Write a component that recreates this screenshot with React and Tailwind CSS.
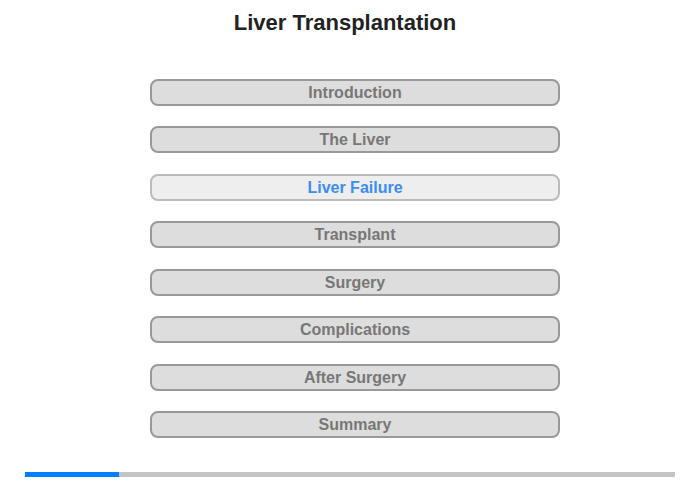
import React from "react";

const sections = [
  "Introduction",
  "The Liver",
  "Liver Failure",
  "Transplant",
  "Surgery",
  "Complications",
  "After Surgery",
  "Summary",
];

const App = () => {
  const active = "Liver Failure";

  return (
    <div className="w-[700px] h-[480px] bg-white flex flex-col font-['Liberation_Sans',Arial,sans-serif]">
      <h1 className="pt-[10px] h-[36px] leading-[26px] text-center pr-[10px] text-[22px] font-bold text-[#222]">
        Liver Transplantation
      </h1>
      <div className="mt-[43px] pl-[10px] flex flex-col items-center gap-[20.43px]">
        {sections.map((s) => (
          <button
            key={s}
            className={
              s === active
                ? "w-[410px] h-[27px] rounded-[8px] border-2 border-[#bbb] bg-[#eee] text-[#3b8cf5] text-[16px] font-bold leading-[23px]"
                : "w-[410px] h-[27px] rounded-[8px] border-2 border-[#999] bg-[#ddd] text-[#777] text-[16px] font-bold leading-[23px]"
            }
          >
            {s}
          </button>
        ))}
      </div>
      <div className="mt-[34px] mx-[25px] h-[5px] bg-[#c3c3c3] flex">
        <div className="w-[94px] h-full bg-[#0080ff]" />
      </div>
    </div>
  );
};

export default App;
